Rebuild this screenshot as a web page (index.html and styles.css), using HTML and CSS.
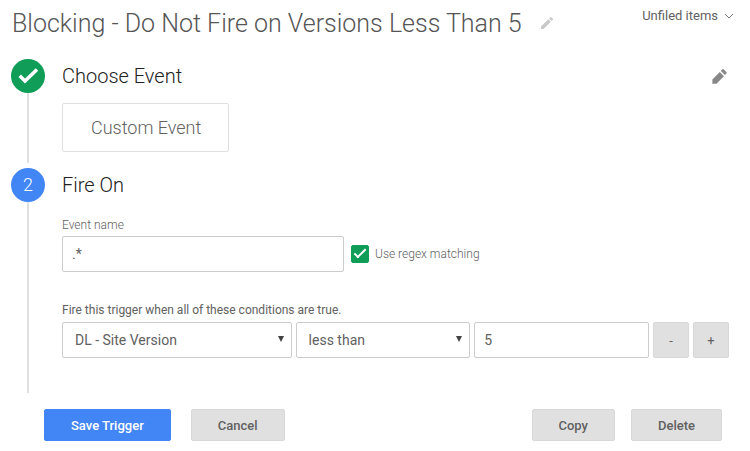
FILE: index.html
```html
<!DOCTYPE html>
<html lang="en">
<head>
    <meta charset="UTF-8" />
    <meta name="viewport" content="width=device-width, initial-scale=1.0" />
    <title>Edit Trigger</title>
    <link rel="stylesheet" href="styles.css">
</head>
<body>
    <header class="header">
        <h1>Blocking - Do Not Fire on Versions Less Than 5</h1>
        <button type="button" class="icon-btn rename" aria-label="Rename trigger">
            <svg width="16" height="16" viewBox="0 0 24 24"><path d="M3 17.25V21h3.75L17.81 9.94l-3.75-3.75L3 17.25zM20.71 7.04a1 1 0 0 0 0-1.41l-2.34-2.34a1 1 0 0 0-1.41 0l-1.83 1.83 3.75 3.75 1.83-1.83z"/></svg>
        </button>
        <button type="button" class="folder">
            Unfiled items
            <svg width="10" height="6" viewBox="0 0 10 6"><path d="M1 1l4 4 4-4"/></svg>
        </button>
    </header>

    <form class="trigger-form">
        <section class="step">
            <div class="rail">
                <span class="badge done">
                    <svg width="34" height="34" viewBox="0 0 34 34"><path d="M8.700 16.800l5.300 5.200L26 10.400"/></svg>
                </span>
            </div>
            <div class="step-body">
                <div class="step-head">
                    <h2>Choose Event</h2>
                    <button type="button" class="icon-btn edit" aria-label="Edit event">
                        <svg width="19" height="19" viewBox="0 0 24 24"><path d="M3 15.800V21h5.200L17.600 11.600l-5.200-5.200L3 15.800zM20.600 8.400a1.500 1.500 0 0 0 0-2.200l-3-3a1.500 1.500 0 0 0-2.200 0l-1.700 1.700 5.200 5.200z"/></svg>
                    </button>
                </div>
                <div class="event-type">Custom Event</div>
            </div>
        </section>

        <section class="step">
            <div class="rail">
                <span class="badge">2</span>
            </div>
            <div class="step-body">
                <div class="step-head">
                    <h2>Fire On</h2>
                </div>
                <label class="field-label light" for="eventName">Event name</label>
                <div class="event-row">
                    <input type="text" class="field event-name" id="eventName" value=".*">
                    <input type="checkbox" class="check" id="regex" checked>
                    <label class="check-label" for="regex">Use regex matching</label>
                </div>
                <label class="field-label conditions-label" for="variable">Fire this trigger when all of these conditions are true.</label>
                <div class="conditions">
                    <div class="select-box">
                        <select class="field" id="variable">
                            <option>DL - Site Version</option>
                        </select>
                    </div>
                    <div class="select-box">
                        <select class="field" aria-label="Operator">
                            <option>less than</option>
                        </select>
                    </div>
                    <input type="text" class="field" value="5" aria-label="Value">
                    <button type="button" class="btn small">-</button>
                    <button type="button" class="btn small">+</button>
                </div>
            </div>
        </section>

        <footer class="actions">
            <button type="submit" class="btn primary">Save Trigger</button>
            <button type="button" class="btn cancel">Cancel</button>
            <button type="button" class="btn copy">Copy</button>
            <button type="button" class="btn">Delete</button>
        </footer>
    </form>
</body>
</html>
```

FILE: styles.css
```css
* {
    margin: 0;
    padding: 0;
    box-sizing: border-box;
}

body {
    background: #fff;
    color: #616161;
    font-family: Roboto, sans-serif;
    font-size: 14px;
}

button,
input,
select {
    font: inherit;
    color: inherit;
}

svg {
    display: block;
}

.header {
    display: flex;
    align-items: flex-start;
    padding: 8px 16px 19px 12px;
}

h1 {
    font-size: 25px;
    line-height: 32px;
    font-weight: 300;
    color: #555;
}

.icon-btn {
    border: none;
    background: none;
    cursor: pointer;
}

.icon-btn path {
    fill: currentColor;
}

.rename {
    margin: 7px 0 0 17px;
    color: #c8c8c8;
}

.folder {
    display: flex;
    align-items: center;
    gap: 6px;
    margin-left: auto;
    border: none;
    background: none;
    font-size: 13px;
    line-height: 16px;
    white-space: nowrap;
    cursor: pointer;
}

.folder path {
    fill: none;
    stroke: #757575;
}

.trigger-form {
    padding: 0 21px 11px 11px;
}

.step {
    display: flex;
    gap: 17px;
    margin-bottom: 5px;
}

.rail {
    display: flex;
    flex-direction: column;
    align-items: center;
}

.rail::after {
    content: "";
    flex: 1;
    width: 2px;
    background: #e0e0e0;
}

.badge {
    width: 34px;
    height: 34px;
    border-radius: 50%;
    background: #4285f4;
    color: #fff;
    font-size: 18px;
    font-weight: 300;
    line-height: 34px;
    text-align: center;
}

.badge.done {
    background: #0f9d58;
}

.badge path {
    fill: none;
    stroke: #fff;
    stroke-width: 3.500;
}

.step-body {
    flex: 1;
    padding-bottom: 11px;
}

.step-head {
    display: flex;
    align-items: center;
    justify-content: space-between;
    height: 34px;
}

h2 {
    font-size: 20px;
    font-weight: 300;
    color: #212121;
}

.edit {
    color: #888;
}

.event-type {
    width: max-content;
    margin-top: 10px;
    padding: 12px 27px 11px 28px;
    border: 1px solid #e0e0e0;
    border-radius: 2px;
    font-size: 18px;
    font-weight: 300;
    line-height: 24px;
}

.field-label {
    display: block;
    font-size: 12px;
    line-height: 16px;
}

.field-label.light {
    margin-top: 15px;
    font-weight: 300;
}

.event-row {
    display: flex;
    align-items: center;
    margin-top: 3px;
}

.field {
    width: 100%;
    height: 36px;
    padding: 0 9px;
    border: 1px solid #ccc;
    border-radius: 2px;
    background: #fff;
    outline: none;
}

.event-name {
    flex: 0 1 282px;
}

.check {
    appearance: none;
    width: 18px;
    height: 18px;
    margin: 0 6px 0 7px;
    border-radius: 2px;
    border: 1px solid #0f9d58;
}

.check:checked {
    display: grid;
    place-items: center;
    background: #0f9d58;
}

.check:checked::after {
    content: "";
    width: 10px;
    height: 4px;
    margin-bottom: 4px;
    border: solid #fff;
    border-width: 0 0 2px 2px;
    transform: rotate(-45deg);
}

.check-label {
    font-size: 12px;
    font-weight: 300;
}

.conditions-label {
    margin: 30px 0 4px;
}

.conditions {
    display: grid;
    grid-template-columns: 230fr 175fr 175fr 36px 36px;
    gap: 4px;
    margin-bottom: 24px;
}

.select-box {
    position: relative;
}

.select-box .field {
    appearance: none;
    padding: 0 12px;
}

/* drop-down arrow */
.select-box::after {
    content: "";
    position: absolute;
    top: 14px;
    right: 8px;
    border: solid transparent;
    border-width: 6px 3px 0;
    border-top-color: #424242;
    pointer-events: none;
}

.btn {
    height: 32px;
    padding: 0 26px;
    border: 1px solid #d8d8d8;
    border-radius: 2px;
    background: #e0e0e0;
    font-size: 13px;
    font-weight: 500;
    cursor: pointer;
}

.btn.small {
    height: 36px;
    padding: 0;
    font-weight: 400;
}

.btn.primary {
    border-color: #4285f4;
    background: #4285f4;
    color: #fff;
}

.actions {
    display: flex;
    padding: 11px 7px 0 33px;
}

.cancel {
    margin-left: 20px;
}

.copy {
    margin: 0 16px 0 auto;
}
```
